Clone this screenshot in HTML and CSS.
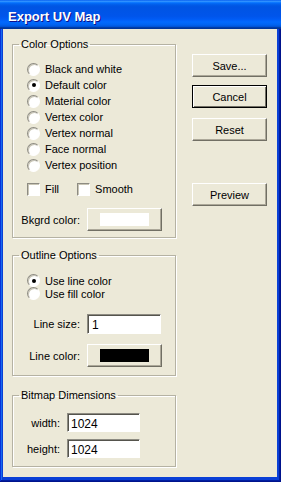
FILE: index.html
```html
<!DOCTYPE html>
<html>
<head>
  <title>Export UV Map</title>
  <link rel="stylesheet" href="styles.css">
</head>
<body>
  <div class="window">
    <div class="titlebar">Export UV Map</div>
    <div class="dialog">
      <div class="groups">
        <fieldset class="group color-group">
          <legend>Color Options</legend>
          <div class="radio-list">
            <div class="option"><span class="radio"></span>Black and white</div>
            <div class="option"><span class="radio on"></span>Default color</div>
            <div class="option"><span class="radio"></span>Material color</div>
            <div class="option"><span class="radio"></span>Vertex color</div>
            <div class="option"><span class="radio"></span>Vertex normal</div>
            <div class="option"><span class="radio"></span>Face normal</div>
            <div class="option"><span class="radio"></span>Vertex position</div>
          </div>
          <div class="checks">
            <div class="option"><span class="check"></span>Fill</div>
            <div class="option smooth"><span class="check"></span>Smooth</div>
          </div>
          <div class="field bkgrd">
            <label>Bkgrd color:</label>
            <button type="button" class="btn swatch-btn"><span class="swatch white"></span></button>
          </div>
        </fieldset>

        <fieldset class="group outline-group">
          <legend>Outline Options</legend>
          <div class="radio-list tight">
            <div class="option"><span class="radio on"></span>Use line color</div>
            <div class="option"><span class="radio"></span>Use fill color</div>
          </div>
          <div class="field line-size">
            <label for="lineSize">Line size:</label>
            <input type="text" id="lineSize" class="textbox" value="1">
          </div>
          <div class="field line-color">
            <label>Line color:</label>
            <button type="button" class="btn swatch-btn"><span class="swatch black"></span></button>
          </div>
        </fieldset>

        <fieldset class="group bitmap-group">
          <legend>Bitmap Dimensions</legend>
          <div class="field small">
            <label for="bmWidth">width:</label>
            <input type="text" id="bmWidth" class="textbox" value="1024">
          </div>
          <div class="field small second">
            <label for="bmHeight">height:</label>
            <input type="text" id="bmHeight" class="textbox" value="1024">
          </div>
        </fieldset>
      </div>

      <div class="actions">
        <button type="button" class="btn save">Save...</button>
        <button type="button" class="btn default cancel">Cancel</button>
        <button type="button" class="btn reset">Reset</button>
        <button type="button" class="btn preview">Preview</button>
      </div>
    </div>
  </div>
</body>
</html>
```

FILE: styles.css
```css
html, body {
  margin: 0;
  padding: 0;
}

body {
  font-family: "Liberation Sans", Arial, sans-serif;
  font-size: 11px;
  color: #000;
  background-color: #0831d9;
}

.window {
  width: 281px;
  height: 482px;
  display: flex;
  flex-direction: column;
  background-color: #0a3fd6;
  box-shadow: inset -1px -1px #00138c, inset 1px 0 #0831d9, inset -2px -2px #001ea0, inset 2px 0 #166aee;
}

.titlebar {
  height: 29px;
  box-sizing: border-box;
  padding: 3px 0 0 8px;
  display: flex;
  align-items: center;
  color: #fff;
  font-weight: bold;
  font-size: 13px;
  text-shadow: 1px 1px #0f1089;
  background: linear-gradient(180deg, #0058ee 0%, #3593ff 4%, #288eff 6%, #127dff 8%, #036ffc 10%, #0262ee 14%, #0057e5 20%, #0054e3 24%, #0055eb 56%, #005bf5 66%, #026afe 76%, #0062ef 86%, #0052d6 92%, #0040ab 94%, #003092 100%);
}

.dialog {
  flex: 1;
  margin: 0 4px 5px 3px;
  padding: 9px 0 0 9px;
  background-color: #ece9d8;
  display: flex;
  gap: 16px;
}

.groups {
  width: 164px;
}

/* etched group box: dark line with a white line inside and below */
.group {
  margin: 0;
  padding: 0;
  border: 1px solid #b5b2a3;
  box-shadow: 1px 1px #fff, inset 1px 1px #fff;
}

.group legend {
  margin-left: 6px;
  padding: 0 2px;
  line-height: 13px;
}

.color-group {
  padding: 10px 0 6px 0;
}

.outline-group {
  margin-top: 11px;
  padding: 12px 0 8px 0;
}

.bitmap-group {
  margin-top: 13px;
  padding: 11px 0 8px 0;
}

.option {
  height: 16px;
  display: flex;
  align-items: center;
  padding-left: 14px;
}

.tight .option {
  height: 13px;
}

.radio {
  width: 11px;
  height: 11px;
  margin-right: 5px;
  border-radius: 50%;
  border: 1px solid;
  border-color: #8d8b82 #ffffff #ffffff #8d8b82;
  background-color: #fff;
  box-shadow: inset 1px 1px #c9c6b6;
  display: flex;
  align-items: center;
  justify-content: center;
}

.radio.on::after {
  content: "";
  width: 4px;
  height: 4px;
  border-radius: 50%;
  background-color: #000;
}

.checks {
  margin-top: 8px;
  display: flex;
}

.checks .smooth {
  padding-left: 18px;
}

.check {
  width: 11px;
  height: 11px;
  margin-right: 5px;
  border: 1px solid;
  border-color: #8d8b82 #ffffff #ffffff #8d8b82;
  background-color: #fff;
  box-shadow: inset 1px 1px #c9c6b6;
}

.field {
  display: flex;
  align-items: center;
}

.field label {
  width: 67px;
  margin-right: 7px;
  text-align: right;
}

.bkgrd {
  margin-top: 11px;
}

.line-size {
  margin-top: 14px;
}

.line-color {
  margin-top: 10px;
}

.field.small label {
  width: 47px;
}

.field.second {
  margin-top: 7px;
}

.textbox {
  box-sizing: border-box;
  height: 20px;
  width: 74px;
  margin: 0;
  padding: 2px 3px 0 4px;
  font-family: "Liberation Sans", Arial, sans-serif;
  font-size: 12px;
  color: #000;
  background-color: #fff;
  border: 1px solid;
  border-color: #8d8b82 #ffffff #ffffff #8d8b82;
  box-shadow: inset 1px 1px #55544d;
  outline: none;
}

.small .textbox {
  width: 73px;
  height: 19px;
  padding-left: 3px;
}

.btn {
  box-sizing: border-box;
  width: 75px;
  height: 23px;
  margin: 0;
  padding: 0;
  font-family: "Liberation Sans", Arial, sans-serif;
  font-size: 11px;
  color: #000;
  background-color: #ece9d8;
  border: 1px solid;
  border-color: #ffffff #716f64 #716f64 #ffffff;
  box-shadow: inset -1px -1px #aca899;
  cursor: pointer;
}

.btn.default {
  border-color: #000;
  box-shadow: inset 1px 1px #fff, inset -1px -1px #716f64;
}

.swatch-btn {
  display: flex;
  align-items: center;
  justify-content: center;
}

.swatch {
  width: 49px;
  height: 13px;
}

.swatch.white {
  background-color: #fff;
}

.swatch.black {
  background-color: #000;
}

.actions {
  display: flex;
  flex-direction: column;
  padding-top: 16px;
}

.cancel {
  margin-top: 8px;
}

.reset {
  margin-top: 10px;
}

.preview {
  margin-top: 42px;
}
```
